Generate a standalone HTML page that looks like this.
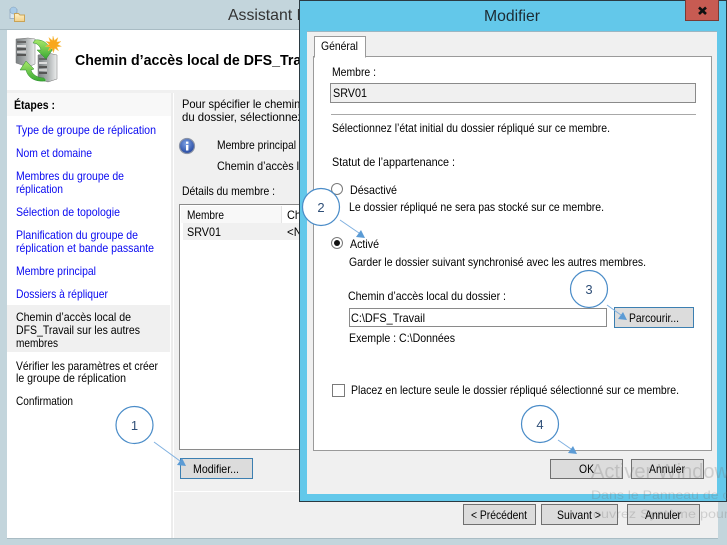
<!DOCTYPE html>
<html lang="fr">
<head>
<meta charset="utf-8">
<title>Modifier</title>
<style>
html,body{margin:0;padding:0;width:727px;height:545px;overflow:hidden;background:#c3d5dc}
svg{display:block}
text{font-family:"Liberation Sans",sans-serif;font-size:12px;fill:#000}
.b{fill:#0808f0}
.h{font-weight:bold}
</style>
</head>
<body>
<svg width="727" height="545" viewBox="0 0 727 545" xmlns="http://www.w3.org/2000/svg">
<defs>
<linearGradient id="sv" x1="0" x2="1" y1="0" y2="0"><stop offset="0" stop-color="#7a8082"/><stop offset=".5" stop-color="#a9adae"/><stop offset="1" stop-color="#eceeee"/></linearGradient>
<linearGradient id="gr" x1="0" x2="0" y1="0" y2="1"><stop offset="0" stop-color="#a8e86a"/><stop offset="1" stop-color="#38a832"/></linearGradient>
<radialGradient id="inf" cx=".45" cy=".35" r=".7"><stop offset="0" stop-color="#7fa4e6"/><stop offset="1" stop-color="#1c3f9a"/></radialGradient>
<linearGradient id="fo" x1="0" x2="0" y1="0" y2="1"><stop offset="0" stop-color="#fff2c8"/><stop offset="1" stop-color="#f2d088"/></linearGradient>
</defs>

<!-- Outer window -->
<rect width="727" height="545" fill="#c3d5dc"/>
<rect x="0" y="29" width="727" height="1" fill="#a9bcc4"/>
<path d="M10 9.500h7v9h-7z" fill="#dbe8f2" stroke="#9db4c8"/>
<circle cx="13.500" cy="10.500" r="3.500" fill="#a8cbe8" stroke="#7e9cb8" stroke-width=".5"/>
<path d="M14.500 13.500h4l1.500 1.500h4.500v6.500h-10z" fill="url(#fo)" stroke="#c9a356"/>
<text x="228" y="20" style="font-size:16px;fill:#333" textLength="80" lengthAdjust="spacingAndGlyphs">Assistant N</text>

<!-- Client -->
<rect x="7" y="30" width="711" height="508" fill="#fff"/>
<rect x="7" y="538" width="711" height="1" fill="#a9bcc4"/>
<rect x="7" y="90" width="711" height="3" fill="#f0f0f0"/>
<rect x="7" y="93" width="164" height="23" fill="#f8f8f8"/>
<rect x="171" y="93" width="2" height="445" fill="#ececec"/>
<rect x="174" y="93" width="544" height="445" fill="#f0f0f0"/>
<rect x="174" y="491" width="544" height="1" fill="#fff"/>

<!-- Header icon -->
<g>
<path d="M16 39l12-1 7 1v25l-7 3-12-4z" fill="url(#sv)" stroke="#777" stroke-width=".5"/>
<rect x="17" y="41" width="9" height="2" fill="#666"/><rect x="17" y="45" width="9" height="2" fill="#ddd"/><rect x="17" y="48" width="9" height="2" fill="#555"/><rect x="17" y="51" width="9" height="2" fill="#ccc"/><rect x="17" y="54" width="9" height="2" fill="#555"/>
<path d="M38 55l10-2 9 2v24l-9 3-10-3z" fill="url(#sv)" stroke="#777" stroke-width=".5"/>
<rect x="39" y="58" width="8" height="2" fill="#666"/><rect x="39" y="62" width="8" height="2" fill="#ddd"/><rect x="39" y="66" width="8" height="2" fill="#555"/><rect x="39" y="69" width="8" height="2" fill="#ccc"/><rect x="39" y="72" width="8" height="2" fill="#555"/>
<circle cx="45" cy="80" r="1" fill="#5ed25e"/>
<path d="M35 40c7-1 13 3 15 9l3 0-7 10-9-9 4 0c-1-4-4-7-8-7z" fill="url(#gr)" stroke="#2b8a2b" stroke-width=".5"/>
<path d="M45 81c-10 1-17-3-19-11l-6 0 6-9 8 8-3 1c1 4 6 8 13 8z" fill="url(#gr)" stroke="#2b8a2b" stroke-width=".5"/>
<path d="M53 36l1.400 4.500 3.600-3-1.400 4.500 4.400-.6-3.400 3 3.800 2-4.600.4 1.800 4.200-3.800-2.800-1.400 4.500-1.400-4.500-3.800 2.800 1.800-4.200-4.600-.4 3.800-2-3.400-3 4.400.6-1.400-4.500 3.600 3z" fill="#f9a71c" stroke="#f6c45a" stroke-width=".4"/>
</g>
<text class="h" x="75" y="65" style="font-size:14.5px" textLength="250" lengthAdjust="spacingAndGlyphs">Chemin d’accès local de DFS_Travail</text>

<!-- Sidebar -->
<text class="h" x="14" y="109" textLength="41" lengthAdjust="spacingAndGlyphs">Étapes :</text>
<text class="b" x="16" y="134" textLength="140" lengthAdjust="spacingAndGlyphs">Type de groupe de réplication</text>
<text class="b" x="16" y="157" textLength="76" lengthAdjust="spacingAndGlyphs">Nom et domaine</text>
<text class="b" x="16" y="180" textLength="108" lengthAdjust="spacingAndGlyphs">Membres du groupe de</text>
<text class="b" x="16" y="193" textLength="47" lengthAdjust="spacingAndGlyphs">réplication</text>
<text class="b" x="16" y="216" textLength="104" lengthAdjust="spacingAndGlyphs">Sélection de topologie</text>
<text class="b" x="16" y="239" textLength="122" lengthAdjust="spacingAndGlyphs">Planification du groupe de</text>
<text class="b" x="16" y="252" textLength="138" lengthAdjust="spacingAndGlyphs">réplication et bande passante</text>
<text class="b" x="16" y="275" textLength="80" lengthAdjust="spacingAndGlyphs">Membre principal</text>
<text class="b" x="16" y="298" textLength="92" lengthAdjust="spacingAndGlyphs">Dossiers à répliquer</text>
<rect x="7" y="305" width="163" height="47" fill="#f0f0f0"/>
<text x="16" y="321" textLength="115" lengthAdjust="spacingAndGlyphs">Chemin d’accès local de</text>
<text x="16" y="334" textLength="124" lengthAdjust="spacingAndGlyphs">DFS_Travail sur les autres</text>
<text x="16" y="347" textLength="42" lengthAdjust="spacingAndGlyphs">membres</text>
<text x="16" y="370" textLength="142" lengthAdjust="spacingAndGlyphs">Vérifier les paramètres et créer</text>
<text x="16" y="382" textLength="110" lengthAdjust="spacingAndGlyphs">le groupe de réplication</text>
<text x="16" y="405" textLength="57" lengthAdjust="spacingAndGlyphs">Confirmation</text>

<!-- Main panel -->
<text x="182" y="108" textLength="130" lengthAdjust="spacingAndGlyphs">Pour spécifier le chemin d’</text>
<text x="182" y="121" textLength="127" lengthAdjust="spacingAndGlyphs">du dossier, sélectionnez l</text>
<circle cx="187" cy="146" r="7.500" fill="url(#inf)" stroke="#8a93a6" stroke-width="1.200"/>
<rect x="186" y="145" width="2.400" height="5.500" fill="#fff"/><rect x="186" y="141.600" width="2.400" height="2.200" fill="#fff"/>
<text x="217" y="149" textLength="79" lengthAdjust="spacingAndGlyphs">Membre principal</text>
<text x="217" y="170" textLength="82" lengthAdjust="spacingAndGlyphs">Chemin d’accès l</text>
<text x="182" y="195" textLength="93" lengthAdjust="spacingAndGlyphs">Détails du membre :</text>
<rect x="179.500" y="204.500" width="130" height="245" fill="#fff" stroke="#8a8a8a"/>
<rect x="181" y="206" width="100" height="17" fill="#f8f8f8"/>
<rect x="281" y="206" width="1" height="17" fill="#e4e4e4"/>
<rect x="183" y="223" width="120" height="17" fill="#f0f0f0"/>
<text x="187" y="219" textLength="37" lengthAdjust="spacingAndGlyphs">Membre</text>
<text x="287" y="219" textLength="14" lengthAdjust="spacingAndGlyphs">Ch</text>
<text x="187" y="236" textLength="34" lengthAdjust="spacingAndGlyphs">SRV01</text>
<text x="287" y="236" textLength="15" lengthAdjust="spacingAndGlyphs">&lt;N</text>
<rect x="180.500" y="458.500" width="72" height="20" fill="#dcdcdc" stroke="#3c7fb1"/>
<text x="193" y="473" textLength="46" lengthAdjust="spacingAndGlyphs">Modifier...</text>

<!-- Bottom wizard buttons -->
<rect x="463.500" y="504.500" width="72" height="20" fill="#dcdcdc" stroke="#707070"/>
<text x="471" y="519" textLength="56" lengthAdjust="spacingAndGlyphs">&lt; Précédent</text>
<rect x="541.500" y="504.500" width="76" height="20" fill="#dcdcdc" stroke="#707070"/>
<text x="557" y="519" textLength="44" lengthAdjust="spacingAndGlyphs">Suivant &gt;</text>
<rect x="627.500" y="504.500" width="72" height="20" fill="#dcdcdc" stroke="#707070"/>
<text x="645" y="519" textLength="36" lengthAdjust="spacingAndGlyphs">Annuler</text>

<!-- Dialog -->
<rect x="299.500" y="0.500" width="427" height="501" fill="#63c8ea" stroke="#2b3a42"/>
<rect x="307" y="31" width="410" height="463" fill="#f0f0f0"/>
<rect x="307" y="31" width="410" height="1" fill="#9cb6c2"/>
<rect x="685" y="0" width="34" height="21" fill="#c75b52"/>
<rect x="685" y="20" width="34" height="1" fill="#7a3a34"/><rect x="685" y="0" width="1" height="21" fill="#7a3a34"/><rect x="718" y="0" width="1" height="21" fill="#7a3a34"/>
<path d="M699 7.500l7 6.500M706 7.500l-7 6.500" stroke="#111" stroke-width="2.600" fill="none"/>
<text x="484" y="21" style="font-size:16px;fill:#1c2b33" textLength="56" lengthAdjust="spacingAndGlyphs">Modifier</text>

<rect x="313.500" y="56.500" width="398" height="394" fill="#fff" stroke="#9a9a9a"/>
<path d="M314.500 57.500V36.500H365.500V57.500" fill="#fff" stroke="#9a9a9a"/>
<rect x="315" y="55" width="50" height="3" fill="#fff"/>
<text x="321" y="50" textLength="37" lengthAdjust="spacingAndGlyphs">Général</text>
<text x="332" y="76" textLength="44" lengthAdjust="spacingAndGlyphs">Membre :</text>
<rect x="330.500" y="83.500" width="365" height="19" fill="#f0f0f0" stroke="#8a8a8a"/>
<text x="333" y="97" textLength="34" lengthAdjust="spacingAndGlyphs">SRV01</text>
<rect x="331" y="114" width="365" height="1" fill="#a8a8a8"/>
<text x="332" y="132" textLength="278" lengthAdjust="spacingAndGlyphs">Sélectionnez l’état initial du dossier répliqué sur ce membre.</text>
<text x="332" y="166" textLength="123" lengthAdjust="spacingAndGlyphs">Statut de l’appartenance :</text>
<circle cx="337" cy="189" r="5.500" fill="#fff" stroke="#7a7a7a"/>
<text x="350" y="194" textLength="47" lengthAdjust="spacingAndGlyphs">Désactivé</text>
<text x="349" y="211" textLength="255" lengthAdjust="spacingAndGlyphs">Le dossier répliqué ne sera pas stocké sur ce membre.</text>
<circle cx="337" cy="243" r="5.500" fill="#fff" stroke="#7a7a7a"/>
<circle cx="337" cy="243" r="3" fill="#111"/>
<text x="350" y="248" textLength="29" lengthAdjust="spacingAndGlyphs">Activé</text>
<text x="349" y="266" textLength="297" lengthAdjust="spacingAndGlyphs">Garder le dossier suivant synchronisé avec les autres membres.</text>
<text x="348" y="300" textLength="158" lengthAdjust="spacingAndGlyphs">Chemin d’accès local du dossier :</text>
<rect x="349.500" y="308.500" width="257" height="18" fill="#fff" stroke="#8a8a8a"/>
<text x="351" y="322" textLength="74" lengthAdjust="spacingAndGlyphs">C:\DFS_Travail</text>
<rect x="614.500" y="307.500" width="79" height="20" fill="#dcdcdc" stroke="#3c7fb1"/>
<text x="629" y="322" textLength="50" lengthAdjust="spacingAndGlyphs">Parcourir...</text>
<text x="349" y="342" textLength="106" lengthAdjust="spacingAndGlyphs">Exemple : C:\Données</text>
<rect x="332.500" y="384.500" width="12" height="12" fill="#fff" stroke="#7a7a7a"/>
<text x="351" y="394" textLength="328" lengthAdjust="spacingAndGlyphs">Placez en lecture seule le dossier répliqué sélectionné sur ce membre.</text>

<rect x="550.500" y="459.500" width="72" height="19" fill="#dcdcdc" stroke="#707070"/>
<text x="579" y="473" textLength="15" lengthAdjust="spacingAndGlyphs">OK</text>
<rect x="631.500" y="459.500" width="72" height="19" fill="#dcdcdc" stroke="#707070"/>
<text x="649" y="473" textLength="36" lengthAdjust="spacingAndGlyphs">Annuler</text>

<!-- Watermark -->
<text x="591" y="478" style="font-size:20px;fill:#777;fill-opacity:.28" textLength="148" lengthAdjust="spacingAndGlyphs">Activer Windows</text>
<text x="591" y="499" style="font-size:12px;fill:#777;fill-opacity:.28" textLength="212" lengthAdjust="spacingAndGlyphs">Dans le Panneau de configuration</text>
<text x="593" y="518" style="font-size:12px;fill:#777;fill-opacity:.28" textLength="182" lengthAdjust="spacingAndGlyphs">ouvrez Système pour activer</text>

<!-- Callouts -->
<g fill="#fff" stroke="#4a8cc8" stroke-width="1.200">
<circle cx="134.500" cy="425" r="18.500"/>
<circle cx="321" cy="207" r="18.500"/>
<circle cx="589" cy="289" r="18.500"/>
<circle cx="540" cy="424" r="18.500"/>
</g>
<g text-anchor="middle">
<text x="134.500" y="430" style="font-size:13px;fill:#2f4f78">1</text>
<text x="321" y="212" style="font-size:13px;fill:#2f4f78">2</text>
<text x="589" y="294" style="font-size:13px;fill:#2f4f78">3</text>
<text x="540" y="429" style="font-size:13px;fill:#2f4f78">4</text>
</g>
<g stroke="#7fb0e0" stroke-width="1" fill="#5b9bd5">
<path d="M154 442L180 461"/><path d="M186 466l-9-1 5-7z" stroke="none"/>
<path d="M340 220L359 233"/><path d="M365 238l-9-1 5-7z" stroke="none"/>
<path d="M607 305L621 315"/><path d="M627 320l-9-1 5-7z" stroke="none"/>
<path d="M558 440L571 449"/><path d="M577 454l-9-1 5-7z" stroke="none"/>
</g>
</svg>
</body>
</html>
